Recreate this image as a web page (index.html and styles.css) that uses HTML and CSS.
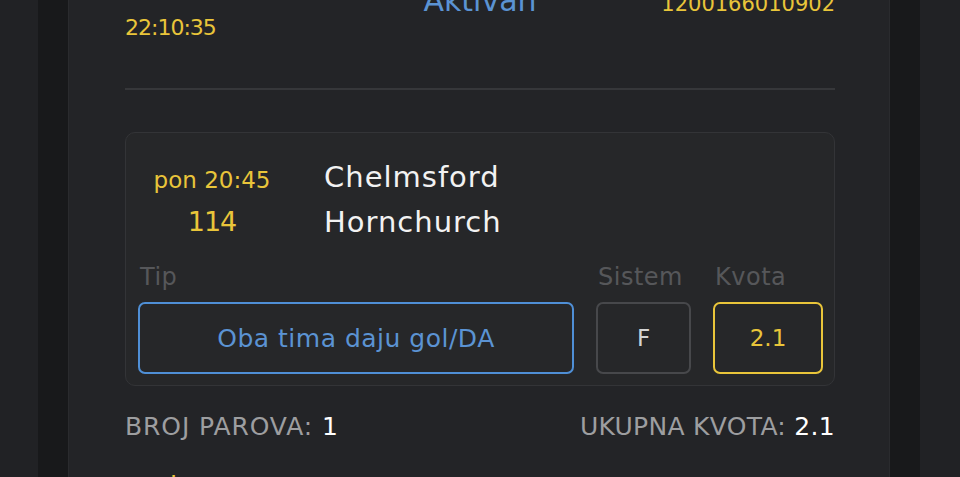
FILE: index.html
```html
<!DOCTYPE html>
<html lang="sr">
<head>
    <meta charset="UTF-8">
    <meta name="viewport" content="width=device-width, initial-scale=1.0">
    <title>Tiket 1200166010902</title>
    <link rel="stylesheet" href="styles.css">
</head>
<body>
    <div class="frame">
        <div class="panel">
            <div class="ticket-head">
                <span class="head-value status col-mid">Aktivan</span>
                <span class="head-value yellow col-right">1200166010902</span>
                <span class="head-value yellow col-left time">22:10:35</span>
            </div>

            <div class="divider"></div>

            <div class="match-card">
                <div class="match-row">
                    <div class="match-time">
                        <div class="kickoff">pon 20:45</div>
                        <div class="match-code">114</div>
                    </div>
                    <div class="teams">
                        <div class="team">Chelmsford</div>
                        <div class="team">Hornchurch</div>
                    </div>
                </div>

                <div class="bet-grid">
                    <div class="bet-label">Tip</div>
                    <div class="bet-label">Sistem</div>
                    <div class="bet-label">Kvota</div>

                    <div class="bet-box tip">Oba tima daju gol/DA</div>
                    <div class="bet-box system">F</div>
                    <div class="bet-box odds">2.1</div>
                </div>
            </div>

            <div class="summary">
                <div class="summary-item">BROJ PAROVA: <span class="summary-value">1</span></div>
                <div class="summary-item">UKUPNA KVOTA: <span class="summary-value">2.1</span></div>
            </div>

            <div class="next-row">
                <span class="yellow">Iznos</span>
            </div>
        </div>
    </div>
</body>
</html>
```

FILE: styles.css
```css
* {
    margin: 0;
    padding: 0;
    box-sizing: border-box;
}

body {
    font-family: 'DejaVu Sans', 'Liberation Sans', sans-serif;
    background: #212225;
    height: 100vh;
    overflow: hidden;
    padding: 0 40px 0 38px;
}

.frame {
    background: #18191b;
    min-height: 100vh;
    padding: 0 30px;
}

.panel {
    background: #232427;
    border-left: 1px solid #2a2b2e;
    border-right: 1px solid #2a2b2e;
    min-height: 100vh;
    padding: 0 54px 0 56px;
}

.yellow {
    color: #e9c53a;
}

.ticket-head {
    display: grid;
    grid-template-columns: 1fr auto 1fr;
    grid-template-rows: 27px 23px;
    align-items: baseline;
    margin-top: -11px;
}

.col-left {
    grid-column: 1;
    justify-self: start;
}

.col-mid {
    grid-column: 2;
    justify-self: center;
}

.col-right {
    grid-column: 3;
    justify-self: end;
}

.head-value {
    font-size: 21px;
    line-height: 23px;
}

.head-value.time {
    grid-row: 2;
    font-size: 22px;
    letter-spacing: -1px;
}

.status {
    color: #5b93d3;
    font-size: 30px;
}

.divider {
    height: 2px;
    background: #36373a;
    margin-top: 49px;
}

/* match card */
.match-card {
    margin-top: 42px;
    background: #262729;
    border: 1px solid #333437;
    border-radius: 10px;
    padding: 22px 12px 11px 12px;
}

.match-row {
    display: flex;
    gap: 38px;
}

.match-time {
    width: 148px;
    text-align: center;
    color: #e9c53a;
    padding-top: 4px;
}

.kickoff {
    font-size: 23px;
    line-height: 42px;
}

.match-code {
    font-size: 27px;
    line-height: 42px;
    letter-spacing: -1px;
}

.team {
    color: #f2f2f2;
    font-size: 29px;
    line-height: 45px;
    letter-spacing: 1px;
}

.bet-grid {
    display: grid;
    grid-template-columns: 436px 95px 110px;
    column-gap: 22px;
    grid-template-rows: 30px 72px;
    row-gap: 10px;
    margin-top: 17px;
}

.bet-label {
    color: #56575a;
    font-size: 24px;
    line-height: 30px;
    letter-spacing: 0.5px;
    padding-left: 2px;
}

.bet-box {
    display: flex;
    align-items: center;
    justify-content: center;
    border: 2px solid #47484b;
    border-radius: 7px;
    font-size: 23px;
}

.bet-box.tip {
    border-color: #4f8fd6;
    color: #5b93d3;
    font-size: 25px;
    letter-spacing: 0.5px;
}

.bet-box.system {
    color: #d4d4d4;
}

.bet-box.odds {
    border-color: #e9c53a;
    color: #e9c53a;
}

/* totals */
.summary {
    display: flex;
    justify-content: space-between;
    margin-top: 26px;
}

.summary-item {
    color: #9d9ea0;
    font-size: 25px;
    line-height: 30px;
    letter-spacing: 0.3px;
}

.summary-item:first-child {
    letter-spacing: 0.9px;
}

.summary-value {
    color: #ffffff;
}

.next-row {
    margin-top: 28px;
    padding-left: 45px;
    font-size: 24px;
    line-height: 30px;
}
```
